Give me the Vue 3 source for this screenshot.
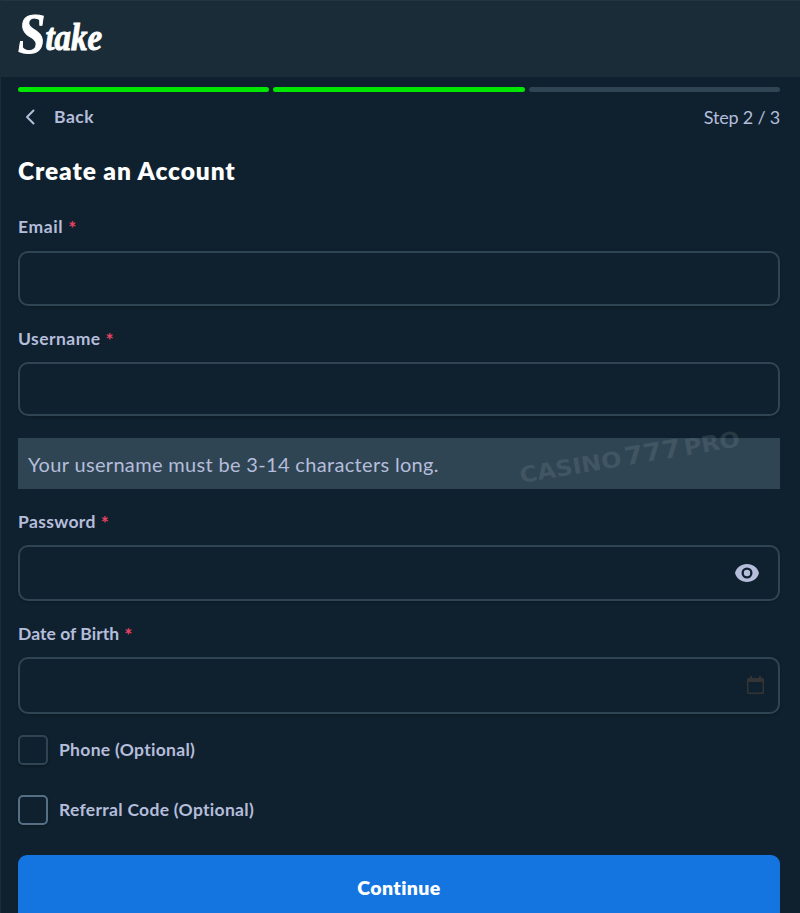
<template>
  <div class="register">
    <header class="header">
      <svg class="logo" width="92" height="52" viewBox="0 0 92 52" role="img" aria-label="Stake">
        <text x="4" y="42" textLength="84" lengthAdjust="spacingAndGlyphs"><tspan class="logo-initial">S</tspan><tspan dy="-3">take</tspan></text>
      </svg>
    </header>

    <main class="content">
      <div class="progress">
        <span v-for="n in totalSteps" :key="n" class="bar" :class="{ done: n <= step }"></span>
      </div>

      <div class="step-row">
        <button type="button" class="back">
          <svg width="10" height="16" viewBox="0 0 10 16">
            <path d="M8.500 1.500 2 8l6.500 6.500" fill="none" stroke="currentColor" stroke-width="2" stroke-linecap="round" stroke-linejoin="round" />
          </svg>
          <span>Back</span>
        </button>
        <span class="step-text">Step {{ step }} / {{ totalSteps }}</span>
      </div>

      <h1 class="title">Create an Account</h1>

      <form class="form" @submit.prevent>
        <div v-for="field in fields" :key="field.id" class="field" :class="'field-' + field.id">
          <label class="label" :for="field.id">
            <span>{{ field.label }}</span>
            <span class="required">*</span>
          </label>
          <div class="input-wrap">
            <input :id="field.id" v-model="form[field.id]" :type="inputType(field)" class="input" />
            <button v-if="field.id === 'password'" type="button" class="eye" @click="showPassword = !showPassword">
              <svg width="24" height="18" viewBox="0 0 24 18">
                <path fill="currentColor" fill-rule="evenodd" d="M12 0C6 0 1.500 3.500 0 9c1.500 5.500 6 9 12 9s10.500-3.500 12-9C22.500 3.500 18 0 12 0Zm0 14.500A5.500 5.500 0 1 1 12 3.500a5.500 5.500 0 0 1 0 11Z" />
                <circle cx="12" cy="9" r="3.200" fill="currentColor" />
              </svg>
            </button>
            <svg v-if="field.id === 'birth'" class="calendar" width="17" height="19" viewBox="0 0 17 19">
              <path fill="currentColor" fill-rule="evenodd" d="M3 0h2v2h7V0h2v2h1.500A1.500 1.500 0 0 1 17 3.500v13a1.500 1.500 0 0 1-1.500 1.500h-14A1.500 1.500 0 0 1 0 16.500v-13A1.500 1.500 0 0 1 1.500 2H3V0Zm-1.500 6v10.500h14V6h-14Z" />
            </svg>
          </div>
          <div v-if="field.hint" class="hint">
            <span class="hint-text">{{ field.hint }}</span>
            <svg class="watermark" width="240" height="66" viewBox="0 0 240 66">
              <text x="11" y="55" textLength="223" lengthAdjust="spacingAndGlyphs" transform="rotate(-9.500 11 55)">CASINO<tspan class="sevens" dx="3">777</tspan><tspan dx="3">PRO</tspan></text>
            </svg>
          </div>
        </div>

        <label class="check">
          <input v-model="form.phone" type="checkbox" class="box" />
          <span class="check-text">Phone (Optional)</span>
        </label>
        <label class="check">
          <input v-model="form.referral" type="checkbox" class="box box-active" />
          <span class="check-text">Referral Code (Optional)</span>
        </label>

        <button type="submit" class="continue">Continue</button>
      </form>
    </main>
  </div>
</template>

<script setup>
import { reactive, ref } from 'vue';

const step = 2;
const totalSteps = 3;
const showPassword = ref(false);

const fields = [
  { id: 'email', label: 'Email' },
  { id: 'username', label: 'Username', hint: 'Your username must be 3-14 characters long.' },
  { id: 'password', label: 'Password' },
  { id: 'birth', label: 'Date of Birth' },
];

const form = reactive({
  email: '',
  username: '',
  password: '',
  birth: '',
  phone: false,
  referral: false,
});

const inputType = (field) => {
  return field.id === 'password' && !showPassword.value ? 'password' : 'text';
};
</script>

<style>
body {
  background: #0f212e;
  overflow: hidden;
}
</style>

<style scoped>
* {
  box-sizing: border-box;
}
.register {
  height: 913px;
  overflow: hidden;
  border-left: 1px solid #1a2c38;
  background: #0f212e;
  color: #b5bddb;
  font-family: Lato, "Liberation Sans", sans-serif;
  font-size: 17.5px;
  font-variant-ligatures: none;
}
button {
  border: none;
  padding: 0;
  background: none;
  color: inherit;
  font: inherit;
  letter-spacing: inherit;
}
svg {
  display: block;
}
.header {
  height: 77px;
  padding: 10px 13px;
  background: #1a2c38;
  border-top: 1px solid #213743;
}
.logo {
  overflow: visible;
  fill: #fff;
  stroke: #fff;
  stroke-width: 1;
  font-family: "Liberation Serif", serif;
  font-size: 38px;
  font-style: italic;
  font-weight: 700;
}
.logo-initial {
  font-size: 57px;
}

.content {
  padding: 10px 20px 0 17px;
}
.progress {
  display: flex;
  gap: 4px;
}
.bar {
  flex: 1;
  height: 5px;
  border-radius: 3px;
  background: #2f4553;
}
.bar.done {
  background: #00e701;
}
.step-row {
  display: flex;
  align-items: center;
  justify-content: space-between;
  height: 49px;
  padding-left: 7px;
}
.back {
  display: flex;
  align-items: center;
  gap: 19px;
  font-weight: 700;
  letter-spacing: 0.5px;
}
.step-text {
  padding-top: 1px;
  font-size: 18px;
  letter-spacing: -0.2px;
}
.title {
  height: 60px;
  margin: 0;
  color: #fff;
  font-size: 24.5px;
  font-weight: 800;
  line-height: 60px;
  letter-spacing: 0.9px;
}
.form {
  padding-top: 14px;
}
.field {
  margin-bottom: 20px;
}
.label {
  display: flex;
  align-items: center;
  gap: 5px;
  height: 24px;
  margin-bottom: 12px;
  font-weight: 700;
  letter-spacing: 0.35px;
}
.field-email .label {
  padding-bottom: 2px;
  letter-spacing: 0.6px;
}
.field-username .label {
  letter-spacing: 0.45px;
}
.field-birth .label {
  letter-spacing: 0.05px;
}
.required {
  padding-top: 2px;
  color: #ed4163;
  font-size: 19px;
}
.input-wrap {
  display: flex;
  align-items: center;
  height: 55px;
  border: 2px solid #2f4553;
  border-radius: 10px;
  box-shadow: 0 1px 3px rgba(0, 0, 0, 0.2);
}
.field-username .input-wrap {
  height: 54px;
}
.field-password .input-wrap {
  height: 56px;
}
.field-birth {
  margin-bottom: 21px;
}
.field-birth .input-wrap {
  height: 57px;
}
.input {
  flex: 1;
  min-width: 0;
  height: 100%;
  border: none;
  padding: 0 12px;
  outline: none;
  background: transparent;
  color: #fff;
  font: inherit;
}
.eye {
  margin-right: 19px;
}
.calendar {
  margin-right: 14px;
  color: #343434;
}
.hint {
  position: relative;
  display: flex;
  align-items: center;
  height: 51px;
  margin-top: 22px;
  padding-left: 10px;
  background: #2f4553;
  font-size: 20px;
}
.hint-text {
  padding-top: 1px;
  letter-spacing: 0.33px;
}
.watermark {
  position: absolute;
  right: 30px;
  top: -10px;
  fill: rgba(130, 145, 160, 0.22);
  font-family: "DejaVu Sans", sans-serif;
  font-size: 22px;
  font-weight: 700;
  pointer-events: none;
}
.sevens {
  font-size: 25px;
}
.check {
  display: flex;
  align-items: center;
  gap: 11px;
  height: 30px;
  margin-bottom: 30px;
  font-weight: 700;
  letter-spacing: 0.3px;
}
.check-text {
  padding-bottom: 1px;
}
.box {
  appearance: none;
  width: 30px;
  height: 30px;
  margin: 0;
  border: 2px solid #2f4553;
  border-radius: 5px;
  box-shadow: 0 1px 3px rgba(0, 0, 0, 0.3);
}
.box-active {
  border-color: #557086;
}
.continue {
  width: 100%;
  height: 66px;
  padding-bottom: 2px;
  border-radius: 9px;
  background: #1475e1;
  color: #fff;
  font-size: 19.5px;
  font-weight: 800;
  letter-spacing: 0.4px;
}
</style>
